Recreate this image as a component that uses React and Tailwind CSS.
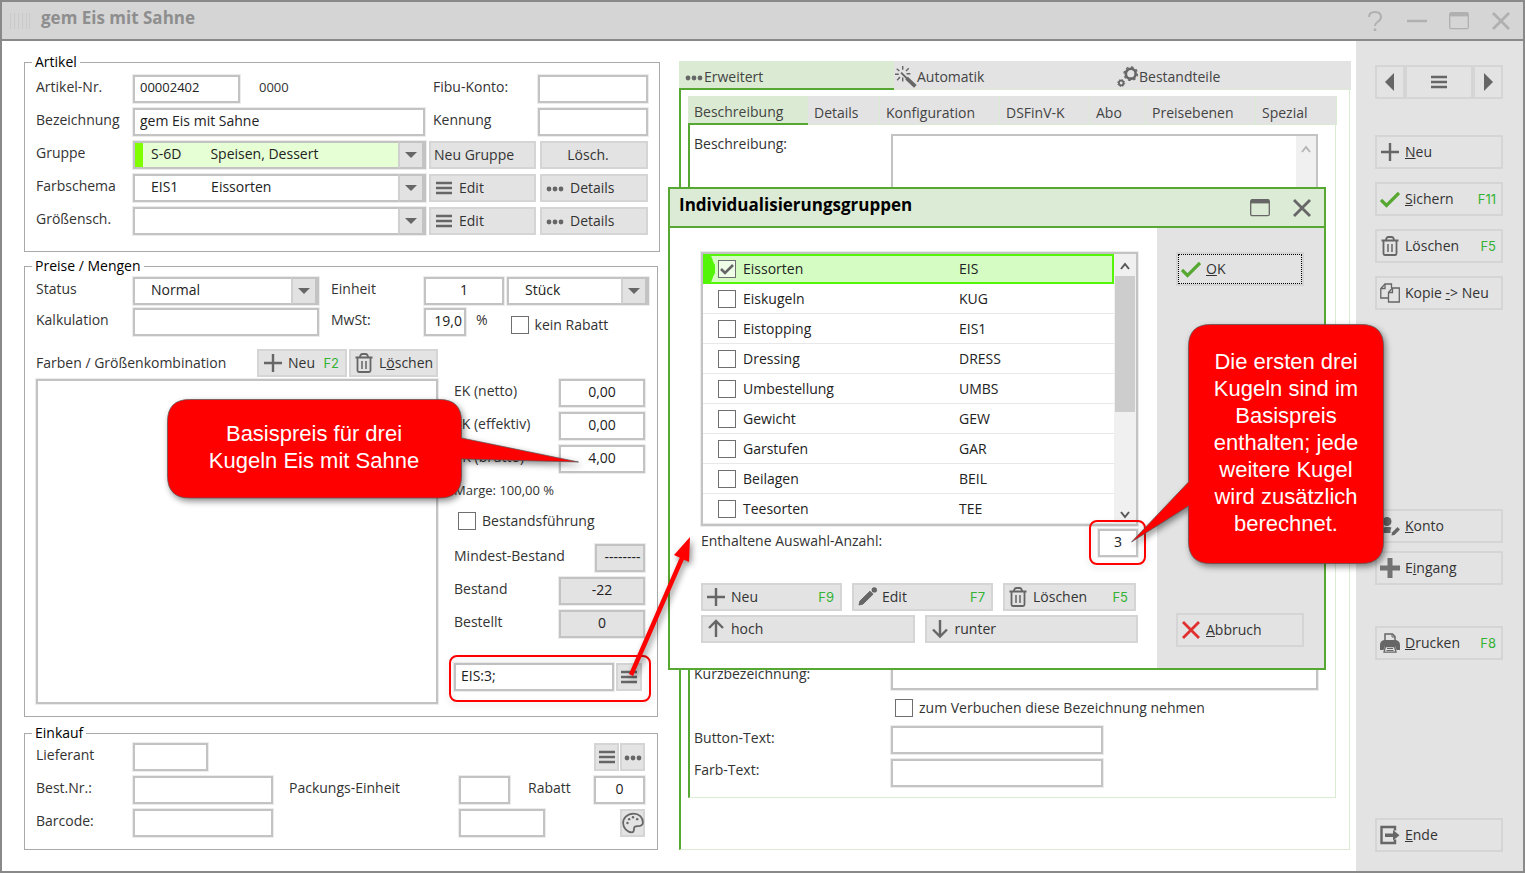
import React, { useState } from 'react';
import clsx from 'clsx';

const groups = [
  { name: 'Eissorten', code: 'EIS' },
  { name: 'Eiskugeln', code: 'KUG' },
  { name: 'Eistopping', code: 'EIS1' },
  { name: 'Dressing', code: 'DRESS' },
  { name: 'Umbestellung', code: 'UMBS' },
  { name: 'Gewicht', code: 'GEW' },
  { name: 'Garstufen', code: 'GAR' },
  { name: 'Beilagen', code: 'BEIL' },
  { name: 'Teesorten', code: 'TEE' },
];

const innerTabs = [
  { label: 'Beschreibung', width: 'w-[120px]' },
  { label: 'Details', width: 'w-[72px]' },
  { label: 'Konfiguration', width: 'w-[120px]' },
  { label: 'DSFinV-K', width: 'w-[90px]' },
  { label: 'Abo', width: 'w-[56px]' },
  { label: 'Preisebenen', width: 'w-[110px]' },
  { label: 'Spezial', width: 'flex-1' },
];

function Svg({ size = 20, className, children }) {
  return (
    <svg
      width={size}
      height={size}
      viewBox="0 0 20 20"
      fill="none"
      stroke="currentColor"
      strokeWidth="2"
      className={clsx('shrink-0', className)}
      aria-hidden="true"
    >
      {children}
    </svg>
  );
}

const ListIcon = () => (
  <Svg>
    <path d="M2 5h16M2 10h16M2 15h16" strokeWidth="2.6" />
  </Svg>
);

const DotsIcon = () => (
  <Svg className="text-[#666]">
    <g fill="currentColor" stroke="none">
      <circle cx="4" cy="11" r="2.4" />
      <circle cx="10" cy="11" r="2.4" />
      <circle cx="16" cy="11" r="2.4" />
    </g>
  </Svg>
);

const PlusIcon = () => (
  <Svg>
    <path d="M10 1v18M1 10h18" strokeWidth="2.4" />
  </Svg>
);

const ThickPlusIcon = () => (
  <Svg>
    <path d="M10 0v20M0 10h20" strokeWidth="5" stroke="#737373" />
  </Svg>
);

const TrashIcon = () => (
  <Svg>
    <path d="M1.5 4.5h17M3.5 5v12.5q0 1.5 1.5 1.5h10q1.5 0 1.5-1.5V5" strokeWidth="1.8" />
    <path d="M6 4q.3-3 2.5-3h3q2.2 0 2.5 3" strokeWidth="1.8" />
    <path d="M8 8v8M12 8v8" strokeWidth="1.5" />
  </Svg>
);

const CheckIcon = () => (
  <Svg>
    <path d="M1 11l5.5 5.5L19 4" stroke="#57a832" strokeWidth="3.2" />
  </Svg>
);

const CopyIcon = () => (
  <Svg>
    <g strokeWidth="1.3">
      <path d="M8 15H.8V5.5L5 1h6.5v4" />
      <path d="M5 1v4.5H1" />
      <path d="M8.5 9.5L12.5 5h6.8v14H8.500z" />
      <path d="M12.5 5v4.5h-4" />
    </g>
  </Svg>
);

const UserPenIcon = () => (
  <Svg>
    <g fill="currentColor" stroke="none">
      <circle cx="7" cy="5.500" r="4.500" />
      <path d="M0 17q0-6 6-6h3q1.5 0 2.5.6L10.500 14v3z" />
      <path d="M12 16.500l5.500-5.500 2.500 2.500-5.500 5.500-3 .5z" />
    </g>
  </Svg>
);

const PrinterIcon = () => (
  <Svg>
    <path d="M5 8V1h7.500L15 3.500V8" strokeWidth="1.500" />
    <path d="M12 1v3h3" strokeWidth="1" />
    <path d="M4 7h12q4 1 4 5v5h-3.500l-1.500-4H5l-1.500 4H0v-5q0-4 4-5z" fill="currentColor" stroke="none" />
    <path d="M5.500 13.500h9l1.500 5.700H4z" fill="#e3e3e3" strokeWidth="1.300" />
    <path d="M7 15.500h6M6.500 17.500h7" strokeWidth="1" />
  </Svg>
);

const ExitIcon = () => (
  <Svg>
    <path d="M15 5.500V2H1.500v16H15v-3.500" strokeWidth="2.400" />
    <path d="M5 8.500h8V5l6.500 5.200L13 15.500V12H5z" fill="currentColor" stroke="none" />
  </Svg>
);

const PencilIcon = () => (
  <Svg>
    <path d="M2 18l1-4L13 4.200l3 3L6 17z" fill="currentColor" stroke="currentColor" strokeWidth="1" />
    <circle cx="17.300" cy="2.900" r="2.700" fill="currentColor" stroke="none" />
  </Svg>
);

const UpIcon = () => (
  <Svg>
    <path d="M10 18V2.500M3 9l7-7 7 7" strokeWidth="2.400" />
  </Svg>
);

const DownIcon = () => (
  <Svg>
    <path d="M10 1v16M3 10.500l7 7 7-7" strokeWidth="2.400" />
  </Svg>
);

const RedXIcon = () => (
  <Svg>
    <path d="M2 2l16 16M18 2L2 18" stroke="#e03030" strokeWidth="2.800" />
  </Svg>
);

const CloseIcon = () => (
  <Svg>
    <path d="M2 2l16 16M18 2L2 18" strokeWidth="2.800" />
  </Svg>
);

const WindowIcon = () => (
  <Svg>
    <rect x=".7" y="1.700" width="18.600" height="16" rx="1.500" strokeWidth="1.300" />
    <path d="M1 3.500h18" strokeWidth="3.800" />
  </Svg>
);

const WandIcon = () => (
  <Svg size={22} className="text-[#666]">
    <path d="M10.500 11l8 7.500" strokeWidth="3.400" />
    <path d="M5.500 6l5.500 5.500" strokeWidth="1.800" />
    <path
      d="M7 0v3.500M1.500 2.500l2.500 2M0 7.500h3.500M12.500 2L10 4.500M14 7h-3.500M2 13l2.500-3M7 14v-3.500"
      strokeWidth="1.300"
    />
  </Svg>
);

const GearsIcon = () => (
  <Svg size={22} className="text-[#666]">
    <circle cx="12.500" cy="7" r="4.500" strokeWidth="2.400" />
    <circle cx="12.500" cy="7" r="6.100" strokeWidth="1.300" strokeDasharray="2.400 2.391" />
    <circle cx="3.800" cy="15.500" r="2.100" strokeWidth="1.600" />
    <circle cx="3.800" cy="15.500" r="3.200" strokeWidth=".9" strokeDasharray="1.260 1.253" />
  </Svg>
);

const PaletteIcon = () => (
  <Svg size={22}>
    <path
      d="M10.500 1.500C5 1.500 1 5.300 1 10s4 8.500 8 8.500c3 0 1-3.500 2.500-5s7.500 1 7.500-4c0-4.500-3.500-8-8.500-8z"
      strokeWidth="1.600"
    />
    <g fill="currentColor" stroke="none">
      <circle cx="5" cy="10" r="1.100" />
      <circle cx="6.500" cy="6.500" r="1.100" />
      <circle cx="10" cy="4.800" r="1.100" />
      <circle cx="13.800" cy="6.500" r="1.100" />
    </g>
  </Svg>
);

function Field({ label, className, ...props }) {
  return (
    <input
      type="text"
      aria-label={label}
      className={clsx(
        'h-7 min-w-0 border-2 border-[#c3c3c3] px-[5px] pb-1 text-[#222] outline-1 outline-[#ececec]',
        className
      )}
      {...props}
    />
  );
}

function Label({ htmlFor, className, children }) {
  return (
    <label htmlFor={htmlFor} className={clsx('pb-1', className)}>
      {children}
    </label>
  );
}

function Select({ id, label, option, className, green }) {
  return (
    <div className={clsx('relative h-7 outline-1 outline-[#ececec]', className)}>
      <select
        id={id}
        aria-label={label}
        className={clsx(
          'h-7 w-full appearance-none border-2 border-[#c3c3c3] pb-[2px] pl-4 text-[#222]',
          green ? 'bg-[#e6ffd5]' : 'bg-white'
        )}
      >
        <option>{option}</option>
      </select>
      {green && <span className="absolute top-[2px] bottom-[2px] left-[2px] w-2 bg-[#80ff00]" />}
      <span className="pointer-events-none absolute inset-y-0 right-0 flex w-7 items-center justify-center border-2 border-r-4 border-[#c3c3c3] border-l-[#d0d0d0] bg-[#e2e2e2]">
        <svg width="12" height="6" viewBox="0 0 12 6" aria-hidden="true">
          <path d="M0 0h12L6 6z" fill="#666" />
        </svg>
      </span>
    </div>
  );
}

function Button({ icon, hotkey, className, children, ...props }) {
  return (
    <button
      type="button"
      className={clsx(
        'flex h-7 items-center border-2 border-[#d5d5d5] bg-[#e3e3e3] text-[#333]',
        className
      )}
      {...props}
    >
      {icon && <span className="text-[#666]">{icon}</span>}
      <span className="pb-px whitespace-nowrap">{children}</span>
      {hotkey && <span className="ml-auto font-[Inter] text-[13px] text-[#33b233]">{hotkey}</span>}
    </button>
  );
}

function SideButton({ className, ...props }) {
  return <Button className={clsx('h-[34px] w-32 gap-[5px] pr-[5px] pl-[3px]', className)} {...props} />;
}

function CheckBox({ checked, onChange, label, id }) {
  return (
    <span className="relative block h-[18px] w-[18px] shrink-0">
      <input
        id={id}
        type="checkbox"
        aria-label={label}
        checked={checked}
        onChange={onChange}
        className="block h-[18px] w-[18px] appearance-none border border-[#6f6f6f] bg-white/60"
      />
      {checked && (
        <svg
          viewBox="0 0 18 18"
          className="pointer-events-none absolute inset-0"
          fill="none"
          stroke="#666"
          strokeWidth="2.600"
          aria-hidden="true"
        >
          <path d="M3 9l4 4 8-8" />
        </svg>
      )}
    </span>
  );
}

function ToggleBox({ label, className }) {
  const [checked, setChecked] = useState(false);
  return (
    <label className={clsx('flex items-center gap-[6px]', className)}>
      <CheckBox checked={checked} onChange={() => setChecked(!checked)} />
      {label}
    </label>
  );
}

function Group({ title, className, children }) {
  return (
    <fieldset className={clsx('min-w-0 border border-[#a9a9a9] pl-[11px]', className)}>
      <legend className="-ml-1 h-5 px-[3px] leading-5 font-medium text-black">{title}</legend>
      {children}
    </fieldset>
  );
}

function ArticleGroup() {
  return (
    <Group title="Artikel" className="pb-4">
      <div className="grid gap-[5px] pt-[3px] pr-[11px]">
        <div className="flex items-center">
          <Label htmlFor="artnr" className="w-[97px]">Artikel-Nr.</Label>
          <Field id="artnr" defaultValue="00002402" className="w-[107px] text-[13px]" />
          <span className="ml-[19px] pb-1 text-[13px]">0000</span>
          <Label htmlFor="fibu" className="ml-auto w-[105px]">Fibu-Konto:</Label>
          <Field id="fibu" className="w-[110px]" />
        </div>
        <div className="flex items-center">
          <Label htmlFor="bez" className="w-[97px]">Bezeichnung</Label>
          <Field id="bez" defaultValue="gem Eis mit Sahne" className="w-[292px]" />
          <Label htmlFor="kennung" className="ml-auto w-[105px]">Kennung</Label>
          <Field id="kennung" className="w-[110px]" />
        </div>
        <div className="flex items-center gap-[3px]">
          <Label htmlFor="gruppe" className="w-[94px]">Gruppe</Label>
          <Select
            id="gruppe"
            green
            option={'S-6D\u00a0\u00a0\u00a0\u00a0\u00a0\u00a0\u00a0\u00a0Speisen, Dessert'}
            className="w-[293px]"
          />
          <Button className="flex-1 pl-[3px]">Neu Gruppe</Button>
          <Button className="ml-px w-[108px] justify-center pr-3">Lösch.</Button>
        </div>
        <div className="flex items-center gap-[3px]">
          <Label htmlFor="farbe" className="w-[94px]">Farbschema</Label>
          <Select
            id="farbe"
            option={'EIS1\u00a0\u00a0\u00a0\u00a0\u00a0\u00a0\u00a0\u00a0\u00a0Eissorten'}
            className="w-[293px]"
          />
          <Button icon={<ListIcon />} className="flex-1 gap-[5px] pl-[3px]">Edit</Button>
          <Button icon={<DotsIcon />} className="ml-px w-[108px] gap-[5px] pl-[3px]">Details</Button>
        </div>
        <div className="flex items-center gap-[3px]">
          <Label htmlFor="groesse" className="w-[94px]">Größensch.</Label>
          <Select id="groesse" option="" className="w-[293px]" />
          <Button icon={<ListIcon />} className="flex-1 gap-[5px] pl-[3px]">Edit</Button>
          <Button icon={<DotsIcon />} className="ml-px w-[108px] gap-[5px] pl-[3px]">Details</Button>
        </div>
      </div>
    </Group>
  );
}

function PriceRow({ id, label, value, className, readOnly }) {
  return (
    <div className="flex h-7 items-center justify-between">
      <Label htmlFor={id} className="whitespace-nowrap">{label}</Label>
      <Field
        id={id}
        defaultValue={value}
        readOnly={readOnly}
        className={clsx('text-center', readOnly && 'bg-[#e3e3e3]', className || 'w-[86px]')}
      />
    </div>
  );
}

function PriceGroup() {
  return (
    <Group title="Preise / Mengen" className="mt-1 mr-[2px] pb-3">
      <div className="grid gap-[3px] pt-px pr-2">
        <div className="flex items-center">
          <Label htmlFor="status" className="w-[97px]">Status</Label>
          <Select id="status" option="Normal" className="w-[186px]" />
          <Label htmlFor="einheit" className="ml-3 w-[93px]">Einheit</Label>
          <Field id="einheit" defaultValue="1" className="w-20 text-center" />
          <Select label="Einheit Art" option="Stück" className="ml-auto w-[142px]" />
        </div>
        <div className="flex items-center">
          <Label htmlFor="kalk" className="w-[97px]">Kalkulation</Label>
          <Field id="kalk" className="w-[186px]" />
          <Label htmlFor="mwst" className="ml-3 w-[93px]">MwSt:</Label>
          <Field id="mwst" defaultValue="19,0" className="w-[42px] pr-[2px] pl-0 text-right" />
          <span className="ml-[10px] pb-1">%</span>
          <ToggleBox label="kein Rabatt" className="ml-[23px] pt-[5px]" />
        </div>
      </div>
      <div className="flex gap-4 pt-[13px] pr-3">
        <div className="flex w-[402px] flex-col gap-[2px]">
          <div className="flex items-center gap-[2px]">
            <span className="flex-1">Farben / Größenkombination</span>
            <Button icon={<PlusIcon />} hotkey="F2" className="w-[90px] gap-[5px] pr-[6px] pl-1">
              Neu
            </Button>
            <Button icon={<TrashIcon />} className="w-[89px] gap-[5px] pl-[3px]">
              L<u>ö</u>schen
            </Button>
          </div>
          <div className="flex-1 border-2 border-[#c3c3c3] outline-1 outline-[#ececec]" />
        </div>
        <div className="flex flex-1 flex-col gap-[5px] pt-[30px] pb-[13px]">
          <PriceRow id="ekn" label="EK (netto)" value="0,00" />
          <PriceRow id="eke" label="EK (effektiv)" value="0,00" />
          <PriceRow id="vkb" label="VK (brutto)" value="4,00" />
          <div className="flex h-7 items-center pb-1 text-[13px]">Marge: 100,00 %</div>
          <ToggleBox label="Bestandsführung" className="h-7 pb-2 pl-1" />
          <PriceRow id="mind" label="Mindest-Bestand" value="--------" readOnly className="w-[50px] pr-0" />
          <PriceRow id="best" label="Bestand" value="-22" readOnly />
          <PriceRow id="bestellt" label="Bestellt" value="0" readOnly />
          <div className="mt-5 flex gap-[2px]">
            <Field label="Individualisierung" defaultValue="EIS:3;" className="w-[160px]" />
            <Button icon={<ListIcon />} aria-label="Auswahl" className="w-[26px] justify-center" />
          </div>
        </div>
      </div>
    </Group>
  );
}

function PurchaseGroup() {
  return (
    <Group title="Einkauf" className="mt-[6px] mr-[2px] pb-3">
      <div className="grid gap-[5px] pr-3">
        <div className="flex items-center">
          <Label htmlFor="lief" className="w-[97px]">Lieferant</Label>
          <Field id="lief" className="w-[75px]" />
          <Button icon={<ListIcon />} aria-label="Liste" className="ml-auto w-[25px] justify-center" />
          <Button icon={<DotsIcon />} aria-label="Mehr" className="ml-px w-[25px] justify-center" />
        </div>
        <div className="flex items-center">
          <Label htmlFor="bestnr" className="w-[97px]">Best.Nr.:</Label>
          <Field id="bestnr" className="w-[140px]" />
          <Label htmlFor="pack" className="ml-4 w-[170px]">Packungs-Einheit</Label>
          <Field id="pack" className="w-[51px]" />
          <Label htmlFor="rabatt" className="ml-[18px]">Rabatt</Label>
          <Field id="rabatt" defaultValue="0" className="ml-auto w-[51px] text-center" />
        </div>
        <div className="flex items-center">
          <Label htmlFor="barcode" className="w-[97px]">Barcode:</Label>
          <Field id="barcode" className="w-[140px]" />
          <Field label="Barcode Zusatz" className="ml-[186px] w-[86px]" />
          <Button icon={<PaletteIcon />} aria-label="Farbe" className="ml-auto w-[25px] justify-center" />
        </div>
      </div>
    </Group>
  );
}

function DetailPanel() {
  return (
    <section className="mt-[9px] mr-[5px] ml-[19px] flex flex-1 flex-col text-[#444]">
      <div className="flex h-[29px] bg-[#e3e3e3]">
        <button type="button" className="flex w-[215px] items-center border-b-2 border-[#57a832] bg-[#dbebd3] pt-1 pl-[5px]">
          <DotsIcon />Erweitert
        </button>
        <button type="button" className="flex w-[222px] items-center border-b border-[#dbebd3] pt-1 pl-px text-left">
          <WandIcon />Automatik
        </button>
        <button type="button" className="flex flex-1 items-center border-b border-[#dbebd3] pt-1 pl-px">
          <GearsIcon />Bestandteile
        </button>
      </div>
      <div className="mr-px flex flex-1 flex-col border-r border-b border-l-2 border-r-[#dbebd3] border-b-[#dbebd3] border-l-[#57a832] pt-[6px] pr-[13px] pb-[51px] pl-[7px]">
        <div className="-mr-px flex h-[29px] bg-[#e3e3e3]">
          {innerTabs.map((tab, index) => (
            <button
              key={tab.label}
              type="button"
              className={clsx(
                'pt-[5px] pl-[6px] text-left',
                tab.width,
                index === 0 ? 'border-b-2 border-[#57a832] bg-[#dbebd3]' : 'border-r border-b border-[#dbebd3]'
              )}
            >
              {tab.label}
            </button>
          ))}
        </div>
        <div className="grid flex-1 grid-cols-[197px_1fr] content-start border-r border-b border-l-2 border-r-[#dbebd3] border-b-[#dbebd3] border-l-[#57a832] pt-[9px] pr-[17px] pl-1 text-[#333]">
          <label htmlFor="beschr">Beschreibung:</label>
          <div className="flex h-[522px] border-2 border-[#c3c3c3]">
            <textarea id="beschr" className="flex-1 resize-none outline-none" />
            <div className="flex w-5 justify-center bg-[#f0f0f0] pt-2">
              <svg width="10" height="10" viewBox="0 0 10 10" fill="none" stroke="#b5b5b5" strokeWidth="2">
                <path d="M1 8l4-5 4 5" />
              </svg>
            </div>
          </div>
          <label htmlFor="kurz" className="pt-2">Kurzbezeichnung:</label>
          <Field id="kurz" className="mt-[6px]" />
          <span />
          <ToggleBox label="zum Verbuchen diese Bezeichnung nehmen" className="h-9 pl-1" />
          <Label htmlFor="btext" className="pt-[2px]">Button-Text:</Label>
          <Field id="btext" className="w-[212px]" />
          <Label htmlFor="ftext" className="pt-[6px]">Farb-Text:</Label>
          <Field id="ftext" className="mt-[5px] w-[212px]" />
        </div>
      </div>
    </section>
  );
}

function Sidebar() {
  return (
    <aside className="flex w-[167px] flex-col gap-[13px] bg-[#e3e3e3] pt-6 pb-[19px] pl-[19px]">
      <div className="mb-[23px] flex w-32">
        <Button aria-label="Zurück" className="h-[34px] w-[30px] justify-center" icon={
          <svg width="10" height="18" viewBox="0 0 10 18" fill="currentColor"><path d="M9 0v18L0 9z" /></svg>
        } />
        <Button aria-label="Liste" className="h-[34px] flex-1 justify-center" icon={<ListIcon />} />
        <Button aria-label="Weiter" className="h-[34px] w-[30px] justify-center" icon={
          <svg width="10" height="18" viewBox="0 0 10 18" fill="currentColor"><path d="M1 0v18l9-9z" /></svg>
        } />
      </div>
      <SideButton icon={<PlusIcon />}><u>N</u>eu</SideButton>
      <SideButton icon={<CheckIcon />} hotkey="F11"><u>S</u>ichern</SideButton>
      <SideButton icon={<TrashIcon />} hotkey="F5">Löschen</SideButton>
      <SideButton icon={<CopyIcon />}>Kopie <u>-</u>&gt; Neu</SideButton>
      <div className="mt-[186px] flex flex-col gap-2">
        <SideButton icon={<UserPenIcon />}><u>K</u>onto</SideButton>
        <SideButton icon={<ThickPlusIcon />}>E<u>i</u>ngang</SideButton>
      </div>
      <SideButton icon={<PrinterIcon />} hotkey="F8" className="mt-7"><u>D</u>rucken</SideButton>
      <SideButton icon={<ExitIcon />} className="mt-auto"><u>E</u>nde</SideButton>
    </aside>
  );
}

function GroupDialog() {
  const [selected, setSelected] = useState(['EIS']);

  const toggle = (code) => {
    setSelected(
      selected.includes(code) ? selected.filter((item) => item !== code) : [...selected, code]
    );
  };

  return (
    <div
      role="dialog"
      aria-label="Individualisierungsgruppen"
      className="absolute top-[185px] left-[666px] w-[658px] border-2 border-[#57a832] bg-white"
    >
      <header className="flex h-[39px] items-center border-b-2 border-[#57a832] bg-[#dcebd5] pr-3 pl-[9px] text-[#666]">
        <h2 className="flex-1 pb-1 text-[17px] font-bold text-black">Individualisierungsgruppen</h2>
        <button type="button" aria-label="Maximieren" className="mr-[22px]"><WindowIcon /></button>
        <button type="button" aria-label="Schließen"><CloseIcon /></button>
      </header>
      <div className="flex">
        <div className="flex-1 pt-6 pr-[19px] pb-[25px] pl-[31px]">
          <div className="flex border-2 border-[#c3c3c3] outline-1 outline-[#ececec]">
            <table className="flex-1 table-fixed border-collapse">
              <tbody className="block">
                {groups.map(({ name, code }, index) => (
                  <tr
                    key={code}
                    className={clsx(
                      'relative flex h-[30px] items-center border-b border-[#e8e8e8] pt-px text-[#222]',
                      index === 0 && 'bg-[#d5fdc3] outline-2 -outline-offset-2 outline-[#55f50a]'
                    )}
                  >
                    <td className="w-10 pl-[15px]">
                      {index === 0 && (
                        <svg width="13" height="30" viewBox="0 0 13 30" className="absolute top-0 left-0" aria-hidden="true">
                          <path d="M0 0h7l2 4q1 4 3 7v8q-2 3-3 7l-2 4H0z" fill="#55f50a" />
                        </svg>
                      )}
                      <CheckBox label={name} checked={selected.includes(code)} onChange={() => toggle(code)} />
                    </td>
                    <td className="w-[216px]">{name}</td>
                    <td>{code}</td>
                  </tr>
                ))}
              </tbody>
            </table>
            <div className="flex w-[22px] flex-col items-center bg-[#f0f0f0]">
              <svg width="10" height="22" viewBox="0 0 10 22" fill="none" stroke="#555" strokeWidth="2">
                <path d="M1 15l4-5 4 5" />
              </svg>
              <div className="h-[136px] w-5 bg-[#cdcdcd]" />
              <svg width="10" height="18" viewBox="0 0 10 18" fill="none" stroke="#555" strokeWidth="2" className="mt-auto">
                <path d="M1 6l4 5 4-5" />
              </svg>
            </div>
          </div>
          <div className="mt-[3px] flex items-center justify-between">
            <Label htmlFor="anzahl">Enthaltene Auswahl-Anzahl:</Label>
            <Field id="anzahl" defaultValue="3" className="w-10 text-center" />
          </div>
          <div className="mt-[26px] flex justify-between pr-[2px]">
            <Button icon={<PlusIcon />} hotkey="F9" className="w-[141px] gap-[5px] pr-[6px] pl-[3px]">Neu</Button>
            <Button icon={<PencilIcon />} hotkey="F7" className="w-[141px] gap-[5px] pr-[6px] pl-[3px]">Edit</Button>
            <Button icon={<TrashIcon />} hotkey="F5" className="w-[133px] gap-[5px] pr-[6px] pl-[3px]">Löschen</Button>
          </div>
          <div className="mt-1 flex gap-[10px]">
            <Button icon={<UpIcon />} className="flex-1 gap-[5px] pl-[3px]">hoch</Button>
            <Button icon={<DownIcon />} className="flex-1 gap-[5px] pl-[3px]">runter</Button>
          </div>
        </div>
        <div className="flex w-[167px] flex-col justify-between bg-[#e3e3e3] pt-6 pb-[21px] pl-[19px]">
          <SideButton icon={<CheckIcon />} className="outline-1 -outline-offset-3 outline-dotted outline-black">
            <u>O</u>K
          </SideButton>
          <SideButton icon={<RedXIcon />}><u>A</u>bbruch</SideButton>
        </div>
      </div>
    </div>
  );
}

function Annotations() {
  return (
    <div className="pointer-events-none absolute -top-[2px] -left-[2px] font-['Liberation_Sans',sans-serif] text-[22px] leading-[27px] text-white">
      <div className="absolute top-[655px] left-[449px] h-[47px] w-[202px] rounded-lg border-2 border-[#f00] drop-shadow-md" />
      <div className="absolute top-[520px] left-[1089px] h-[45px] w-[57px] rounded-lg border-2 border-[#f00] drop-shadow-md" />
      <svg
        width="1400"
        height="720"
        viewBox="0 0 1400 720"
        className="absolute top-0 left-0 drop-shadow-[2px_3px_3px_rgba(0,0,0,0.45)]"
        aria-hidden="true"
      >
        <g fill="#f00">
          <path d="M631 675L683 556" stroke="#f00" strokeWidth="4.500" />
          <path d="M690 537l-16 18 15 7z" />
          <g stroke="#555" strokeOpacity=".7" strokeWidth="1">
            <path d="M189.500 399.500h250q22 0 22 22V438l117 24-117-3v17q0 22-22 22h-250q-22 0-22-22v-54.500q0-22 22-22z" />
            <path d="M1210.500 324.500h151q22 0 22 22v195q0 22-22 22h-151q-22 0-22-22V506l-57 36 57-60V346.500q0-22 22-22z" />
          </g>
        </g>
      </svg>
      <p className="absolute top-[420px] left-[167px] w-[294px] text-center">
        Basispreis für drei
        <br />
        Kugeln Eis mit Sahne
      </p>
      <p className="absolute top-[348px] left-[1188px] w-[196px] px-4 text-center">
        Die ersten drei Kugeln sind im Basispreis enthalten; jede weitere Kugel wird zusätzlich berechnet.
      </p>
    </div>
  );
}

export default function App() {
  return (
    <div className="relative flex min-h-screen flex-col overflow-hidden border-2 border-[#898989] bg-white font-['Open_Sans',sans-serif] text-sm text-[#333]">
      <header className="flex h-[39px] items-center gap-[22px] border-b-2 border-[#898989] bg-[#d5d5d5] pr-3 pl-2 text-[#b0b0b0]">
        <svg width="20" height="16" viewBox="0 0 20 16" stroke="#c9c9c9" aria-hidden="true">
          <path d="M.5 0v16M4.500 0v16M8.500 0v16M12.500 0v16M16.500 0v16M19.500 0v16" />
        </svg>
        <h1 className="-ml-[11px] flex-1 pb-1 text-[17px] font-bold text-[#8e8e8e]">gem Eis mit Sahne</h1>
        <button type="button" aria-label="Hilfe">
          <Svg>
            <path d="M4 6q0-5 6-5t6 5q0 3-3.500 5-2.500 1.500-2.500 4" />
            <path d="M10 17.500v2.500" strokeWidth="2.500" />
          </Svg>
        </button>
        <button type="button" aria-label="Minimieren">
          <Svg>
            <path d="M0 10h20" strokeWidth="2.500" />
          </Svg>
        </button>
        <button type="button" aria-label="Maximieren"><WindowIcon /></button>
        <button type="button" aria-label="Schließen"><CloseIcon /></button>
      </header>
      <div className="flex flex-1">
        <main className="flex flex-1 pt-[11px] pb-[21px] pl-[22px]">
          <div className="w-[636px]">
            <ArticleGroup />
            <PriceGroup />
            <PurchaseGroup />
          </div>
          <DetailPanel />
        </main>
        <Sidebar />
      </div>
      <GroupDialog />
      <Annotations />
    </div>
  );
}
